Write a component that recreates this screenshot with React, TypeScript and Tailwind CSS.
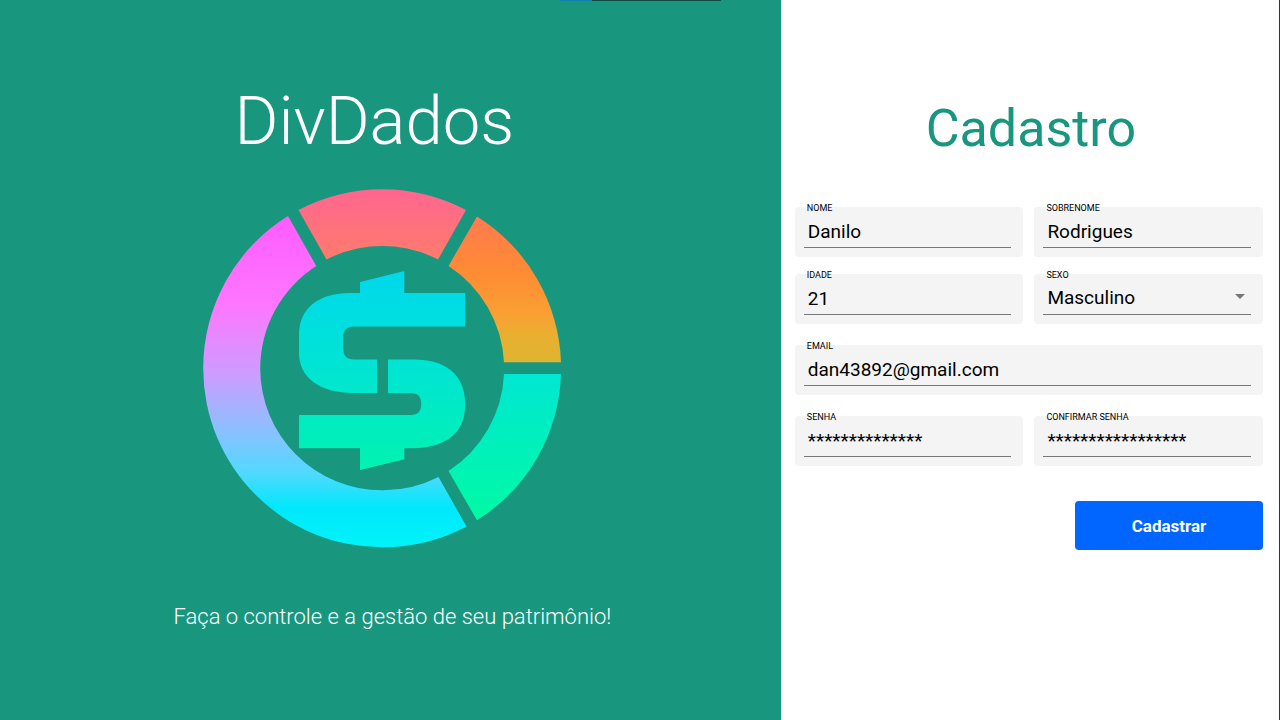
import React from "react";

function Logo() {
  return (
    <svg viewBox="202 188 360 360" className="h-[360px] w-[360px]" role="img" aria-label="DivDados">
      <defs>
        <linearGradient id="pink" x1="0" y1="0" x2="0" y2="1">
          <stop offset="0" stopColor="#ff6690" />
          <stop offset="1" stopColor="#ff7b6c" />
        </linearGradient>
        <linearGradient id="orange" x1="0" y1="0" x2="0" y2="1">
          <stop offset="0" stopColor="#ff7a50" />
          <stop offset="0.38" stopColor="#ff8b34" />
          <stop offset="0.66" stopColor="#fa9f33" />
          <stop offset="0.82" stopColor="#e8b030" />
          <stop offset="1" stopColor="#deb530" />
        </linearGradient>
        <linearGradient id="green" x1="0" y1="0" x2="0" y2="1">
          <stop offset="0" stopColor="#00e7d2" />
          <stop offset="1" stopColor="#00faa4" />
        </linearGradient>
        <linearGradient id="magenta" x1="0" y1="0" x2="0" y2="1">
          <stop offset="0" stopColor="#ff5cff" />
          <stop offset="0.27" stopColor="#fd77ff" />
          <stop offset="0.48" stopColor="#cc9dff" />
          <stop offset="0.66" stopColor="#85c3ff" />
          <stop offset="0.78" stopColor="#4edaff" />
          <stop offset="0.88" stopColor="#00e8fc" />
          <stop offset="1" stopColor="#00f3f8" />
        </linearGradient>
        <linearGradient id="dollar" gradientUnits="userSpaceOnUse" x1="0" y1="271" x2="0" y2="470">
          <stop offset="0" stopColor="#00d8ec" />
          <stop offset="0.5" stopColor="#00e5d2" />
          <stop offset="1" stopColor="#00f3b0" />
        </linearGradient>
      </defs>
      <path fill="url(#pink)" d="M298.5 210A179 179 0 0 1 466 210L438 259.5A122 122 0 0 0 326.5 259.5Z" />
      <path fill="url(#orange)" d="M477 216.5A179 179 0 0 1 561 362.3H504A122 122 0 0 0 448.5 266Z" />
      <path fill="url(#green)" d="M504 374H561A179 179 0 0 1 477 520.3L448.5 471A122 122 0 0 0 504 374Z" />
      <path fill="url(#magenta)" d="M466.5 526.5A179 179 0 0 1 382.2 547.3A179 179 0 0 1 203.2 368.3A179 179 0 0 1 288 216L316.2 266A122 122 0 0 0 260.2 368.3A122 122 0 0 0 382.2 490.3A122 122 0 0 0 438.5 477Z" />
      <path
        fill="url(#dollar)"
        d="M404.3 271V293H465.2V326.5H354Q343.2 326.5 343.2 337V348.5Q343.2 359.5 354 359.5H377V393H354C319 393 299 377 299 353V335C299 307 320 293 350 293H360V282Z"
      />
      <path
        fill="url(#dollar)"
        d="M388 359.5H414C445 359.5 465.2 374 465.2 404C465.2 436 443 448.3 409 448.3H404.3V459.3L360 470V448.3H299V415H411Q421.2 415 421.2 404Q421.2 393 411 393H388Z"
      />
    </svg>
  );
}

const control =
  "h-[33px] w-full appearance-none rounded-none border-b border-[#777777] bg-transparent px-1 text-[19px] leading-6 text-black outline-none";

function Field({ id, label, className = "", children }: {
  id: string;
  label: string;
  className?: string;
  children: React.ReactNode;
}) {
  return (
    <div className={`flex h-[50px] min-w-0 flex-col rounded bg-[#f4f4f4] pr-3 pl-[9px] ${className}`}>
      <label htmlFor={id} className="-mt-1 self-start pl-[3px] text-[9px] leading-[10px] text-black">
        {label}
      </label>
      <div className="relative mt-[2px]">{children}</div>
    </div>
  );
}

export default function App() {
  return (
    <div className="relative flex min-h-screen bg-white font-['Roboto','Liberation_Sans',sans-serif]">
      <div aria-hidden="true" className="absolute top-0 left-[560px] flex h-px w-[161px] bg-[#0c4a3f]">
        <span className="w-8 bg-[#1281ac]" />
      </div>
      <section className="flex w-[61%] flex-col items-center bg-[#18967e] pt-[81px] text-white">
        <h1 className="pr-8 text-[67px] leading-[80px] font-light">DivDados</h1>
        <div className="mt-[27px] pr-4">
          <Logo />
        </div>
        <p className="mt-[54px] pl-1 text-[22px] leading-[30px] font-light">
          Faça o controle e a gestão de seu patrimônio!
        </p>
      </section>
      <main className="flex-1 border-r border-[#333333] px-4 pt-[98px] pl-[14px]">
        <h2 className="pl-1 text-center text-[52px] leading-[62px] text-[#18967e]">Cadastro</h2>
        <form className="mt-[47px] grid grid-cols-2 gap-x-[11px]" onSubmit={(e) => e.preventDefault()}>
          <Field id="nome" label="NOME">
            <input id="nome" className={control} defaultValue="Danilo" />
          </Field>
          <Field id="sobrenome" label="SOBRENOME">
            <input id="sobrenome" className={control} defaultValue="Rodrigues" />
          </Field>
          <Field id="idade" label="IDADE" className="mt-[17px]">
            <input id="idade" className={control} defaultValue="21" inputMode="numeric" />
          </Field>
          <Field id="sexo" label="SEXO" className="mt-[17px]">
            <select id="sexo" className={control} defaultValue="Masculino">
              <option>Masculino</option>
              <option>Feminino</option>
            </select>
            <svg viewBox="0 0 10 5" className="pointer-events-none absolute top-3 right-[6px] h-[5px] w-[10px]" aria-hidden="true">
              <path d="M0 0H10L5 5Z" fill="#777777" />
            </svg>
          </Field>
          <Field id="email" label="EMAIL" className="col-span-2 mt-[21px]">
            <input id="email" type="email" className={control} defaultValue="dan43892@gmail.com" />
          </Field>
          <Field id="senha" label="SENHA" className="mt-[21px]">
            <input id="senha" type="text" autoComplete="off" className={control} defaultValue="**************" />
          </Field>
          <Field id="confirmar" label="CONFIRMAR SENHA" className="mt-[21px]">
            <input id="confirmar" type="text" autoComplete="off" className={control} defaultValue="*****************" />
          </Field>
          <button
            type="submit"
            className="col-span-2 mt-[35px] h-[49px] w-[188px] justify-self-end rounded bg-[#0066ff] text-[17px] leading-6 font-bold text-white"
          >
            Cadastrar
          </button>
        </form>
      </main>
    </div>
  );
}
